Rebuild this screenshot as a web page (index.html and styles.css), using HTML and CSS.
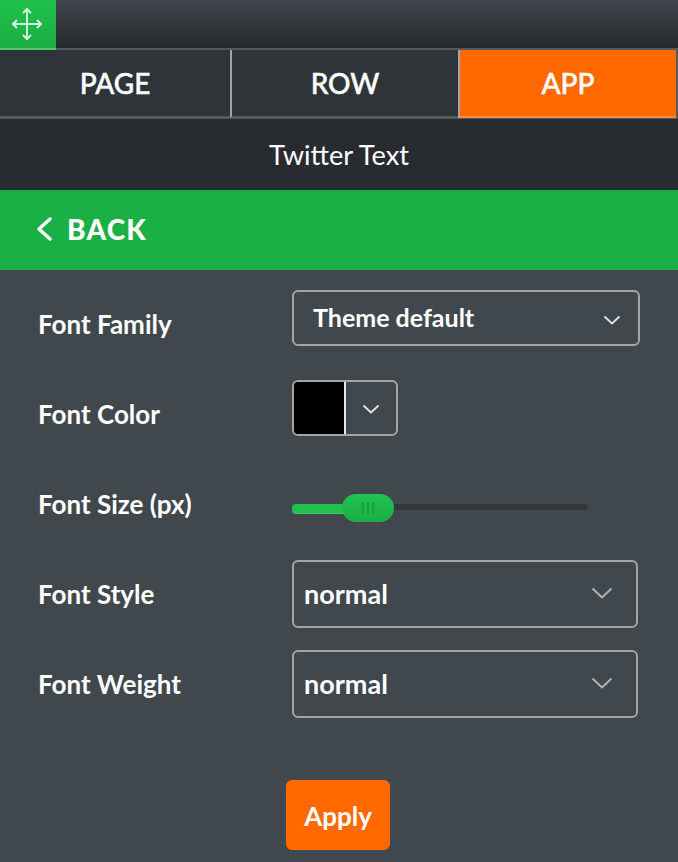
FILE: index.html
```html
<!DOCTYPE html>
<html lang="en">
<head>
    <meta charset="UTF-8">
    <meta name="viewport" content="width=device-width, initial-scale=1.0">
    <title>Twitter Text Settings</title>
    <link rel="stylesheet" href="styles.css">
</head>
<body>
    <div class="top-bar">
        <div class="drag-handle">
            <svg width="32" height="34" viewBox="0 0 32 34" fill="none" stroke="#d6f5df" stroke-width="1.8" stroke-linecap="round" stroke-linejoin="round">
                <path d="M16 2V32M2 17H30"/>
                <path d="M12.5 5.5L16 2L19.5 5.5M12.5 28.5L16 32L19.5 28.5M5.5 13.5L2 17L5.5 20.5M26.5 13.5L30 17L26.5 20.5"/>
            </svg>
        </div>
    </div>
    <div class="tabs">
        <div class="tab tab-page">PAGE</div>
        <div class="tab tab-row">ROW</div>
        <div class="tab tab-app">APP</div>
    </div>
    <div class="title-bar">Twitter Text</div>
    <div class="back-bar">
        <svg width="16" height="24" viewBox="0 0 16 24" fill="none" stroke="#fff" stroke-width="3.4" stroke-linecap="round" stroke-linejoin="round">
            <path d="M14 2L3 12L14 22"/>
        </svg>
        <span>BACK</span>
    </div>
    <div class="panel">
        <div class="field">
            <label>Font Family</label>
            <div class="select select-theme">
                <span>Theme default</span>
                <svg class="chevron" width="18" height="10" viewBox="0 0 18 10"><path d="M1.5 1.5L9 8.5L16.5 1.5"/></svg>
            </div>
        </div>
        <div class="field">
            <label>Font Color</label>
            <div class="color-picker">
                <div class="swatch"></div>
                <div class="color-arrow">
                    <svg class="chevron" width="18" height="10" viewBox="0 0 18 10"><path d="M1.5 1.5L9 8.5L16.5 1.5"/></svg>
                </div>
            </div>
        </div>
        <div class="field">
            <label>Font Size (px)</label>
            <div class="slider">
                <div class="slider-fill"></div>
                <div class="slider-thumb"><i></i><i></i><i></i></div>
                <div class="slider-track"></div>
            </div>
        </div>
        <div class="field">
            <label>Font Style</label>
            <div class="select select-plain">
                <span>normal</span>
                <svg class="chevron" width="22" height="12" viewBox="0 0 22 12"><path d="M1.5 1.5L11 10.5L20.5 1.5"/></svg>
            </div>
        </div>
        <div class="field">
            <label>Font Weight</label>
            <div class="select select-plain">
                <span>normal</span>
                <svg class="chevron" width="22" height="12" viewBox="0 0 22 12"><path d="M1.5 1.5L11 10.5L20.5 1.5"/></svg>
            </div>
        </div>
        <div class="actions">
            <button class="apply">Apply</button>
        </div>
    </div>
</body>
</html>
```

FILE: styles.css
```css
:root {
    --green: #1bb045;
    --orange: #ff6900;
    --panel: #41484d;
    --line: #54595d;
    --control-border: #a3a5a7;
}

html, body {
    height: 100%;
}

body {
    margin: 0;
    display: flex;
    flex-direction: column;
    font-family: "Lato", "Noto Sans", sans-serif;
    background: var(--panel);
    color: #fff;
    overflow: hidden;
}

.top-bar {
    height: 48px;
    flex: none;
    background: linear-gradient(#42464e, #25282b);
}

.drag-handle {
    width: 56px;
    height: 50px;
    box-sizing: border-box;
    display: flex;
    align-items: center;
    justify-content: center;
    padding-right: 2px;
    background: linear-gradient(#1fc24c, #1bac44);
    border-bottom: 2px solid #4fcb72;
    position: relative;
}

.tabs {
    display: flex;
    height: 71px;
    box-sizing: border-box;
    flex: none;
    border-top: 2px solid var(--line);
    border-bottom: 1px solid var(--line);
    border-right: 2px solid var(--line);
    background: #2f3438;
    font-size: 28px;
    font-weight: 500;
    -webkit-text-stroke: 0.5px #fff;
}

.tab {
    display: flex;
    align-items: center;
    justify-content: center;
    box-sizing: border-box;
    border-bottom: 2px solid var(--line);
}

.tab-page {
    width: 230px;
}

.tab-row {
    width: 228px;
    border-left: 2px solid #a3a5a7;
}

.tab-app {
    flex: 1;
    background: var(--orange);
    border-left: 2px solid #a3a5a7;
    border-bottom-color: #ff8a3d;
}

.title-bar {
    height: 71px;
    flex: none;
    display: flex;
    align-items: center;
    justify-content: center;
    background: #282b30;
    font-size: 27.2px;
}

.back-bar {
    height: 80px;
    box-sizing: border-box;
    flex: none;
    display: flex;
    align-items: center;
    gap: 15px;
    padding-left: 36px;
    padding-bottom: 4px;
    background: var(--green);
    border-top: 2px solid #1aa842;
    font-size: 28px;
    font-weight: 900;
    letter-spacing: 1.2px;
}

.panel {
    flex: 1;
    padding-top: 10px;
}

.field {
    display: flex;
    align-items: center;
    height: 90px;
    padding-left: 38px;
}

.field label {
    width: 254px;
    font-size: 26px;
    font-weight: 700;
    padding-bottom: 2px;
}

.select {
    display: flex;
    align-items: center;
    justify-content: space-between;
    box-sizing: border-box;
    border: 2px solid var(--control-border);
    border-radius: 6px;
    font-weight: 700;
}

.select-theme {
    width: 348px;
    height: 56px;
    padding: 0 17px 0 19px;
    margin-bottom: 14px;
    font-size: 25px;
}

.select-plain {
    width: 346px;
    height: 68px;
    padding: 0 23px 0 10px;
    margin-bottom: 2px;
    font-size: 27px;
}

.select span {
    padding-bottom: 2px;
}

.chevron {
    fill: none;
    stroke: #e4e5e6;
    stroke-width: 1.8;
}

.select-theme .chevron {
    margin-top: 3px;
}

.select-plain .chevron {
    stroke: #b4b6b8;
    margin-bottom: 2px;
}

.color-picker {
    display: flex;
    box-sizing: border-box;
    width: 106px;
    height: 56px;
    margin-bottom: 14px;
    border: 2px solid var(--control-border);
    border-radius: 6px;
    overflow: hidden;
}

.swatch {
    width: 52px;
    box-sizing: border-box;
    background: #000;
    border-right: 2px solid #e6e6e6;
}

.color-arrow {
    flex: 1;
    display: flex;
    align-items: center;
    justify-content: center;
    padding-top: 2px;
}

.slider {
    display: flex;
    align-items: center;
    width: 296px;
    margin-top: 5px;
}

.slider-fill {
    width: 54px;
    height: 10px;
    margin-right: -4px;
    margin-top: 2px;
    border-radius: 4px 0 0 4px;
    background: #1fc24c;
    border-bottom: 1px solid #3fc765;
    box-sizing: border-box;
}

.slider-thumb {
    position: relative;
    display: flex;
    flex: none;
    align-items: center;
    justify-content: center;
    gap: 3px;
    width: 52px;
    height: 28px;
    border-radius: 14px;
    background: linear-gradient(#20c24d, #1bb045);
}

.slider-thumb i {
    width: 2px;
    height: 12px;
    background: #17a03f;
}

.slider-track {
    flex: 1;
    height: 6px;
    margin-left: -4px;
    margin-top: -2px;
    border-radius: 0 3px 3px 0;
    background: #34383c;
}

.actions {
    display: flex;
    margin-top: 50px;
    padding-left: 286px;
}

.apply {
    width: 104px;
    height: 70px;
    border: none;
    border-radius: 6px;
    background: var(--orange);
    color: #fff;
    font-family: inherit;
    font-size: 26px;
    font-weight: 700;
    padding: 2px 0 0;
}
```
